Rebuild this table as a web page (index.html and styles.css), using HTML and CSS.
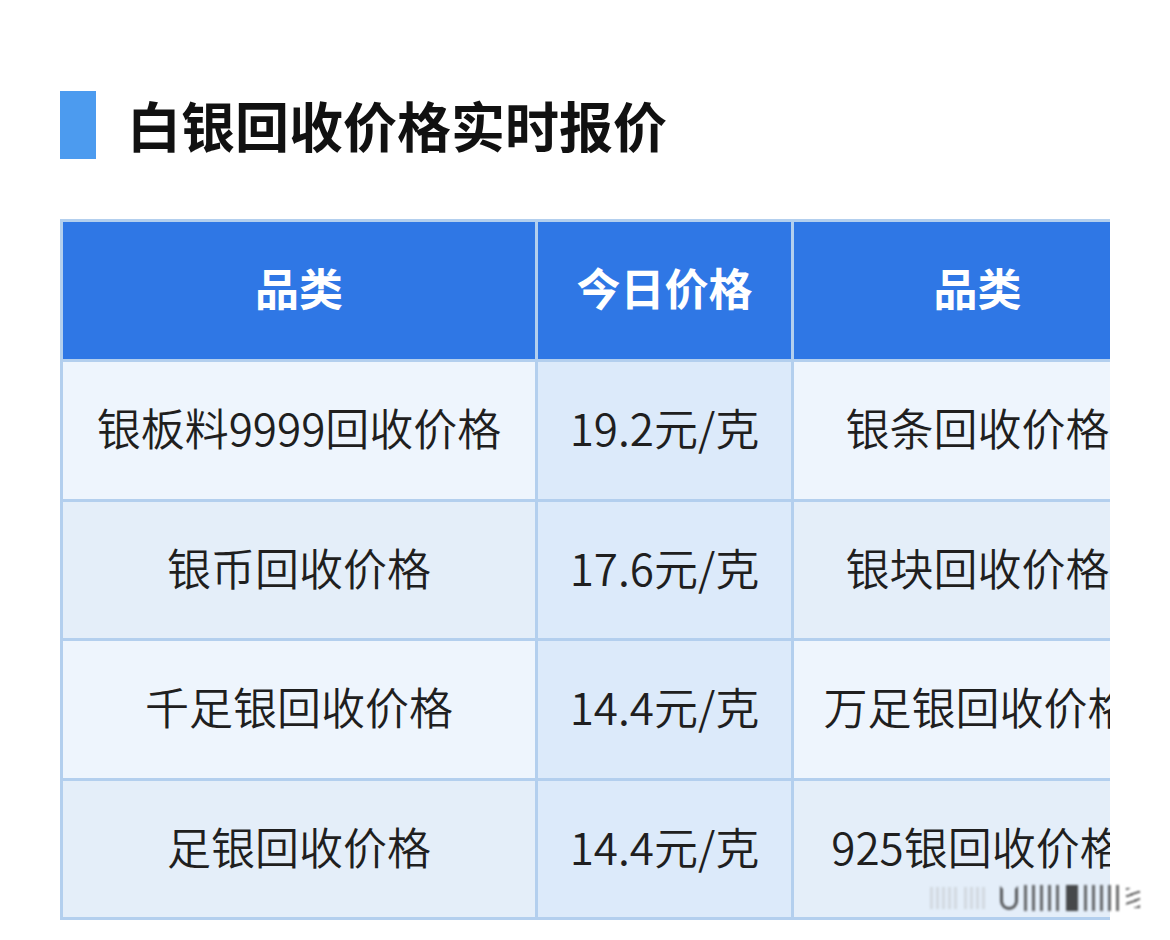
FILE: index.html
```html
<!DOCTYPE html>
<html lang="zh-CN">
<head>
<meta charset="utf-8">
<title>白银回收价格实时报价</title>
<link rel="stylesheet" href="styles.css">
</head>
<body>
<div class="page">
  <div class="heading">
    <span class="bar"></span>
    <h1 class="title">白银回收价格实时报价</h1>
  </div>
  <div class="table-wrap">
    <div class="table">
      <div class="cell head">品类</div>
      <div class="cell head">今日价格</div>
      <div class="cell head">品类</div>

      <div class="cell odd">银板料9999回收价格</div>
      <div class="cell price">19.2元/克</div>
      <div class="cell odd">银条回收价格</div>

      <div class="cell even">银币回收价格</div>
      <div class="cell price">17.6元/克</div>
      <div class="cell even">银块回收价格</div>

      <div class="cell odd">千足银回收价格</div>
      <div class="cell price">14.4元/克</div>
      <div class="cell odd">万足银回收价格</div>

      <div class="cell even">足银回收价格</div>
      <div class="cell price">14.4元/克</div>
      <div class="cell even">925银回收价格</div>
    </div>
  </div>
  <div class="watermark" aria-hidden="true">
    <span class="wm-light"></span>
    <span class="wm-light short"></span>
    <span class="wm-o"></span>
    <span class="wm-bars"></span>
    <span class="wm-dark"></span>
    <span class="wm-bars"></span>
    <span class="wm-end"></span>
  </div>
</div>
</body>
</html>
```

FILE: styles.css
```css
html, body {
  margin: 0;
  padding: 0;
  background: #ffffff;
}

body {
  width: 1170px;
  height: 940px;
  overflow: hidden;
  font-family: "Noto Sans CJK SC", "Noto Sans", sans-serif;
  color: #1e1e1e;
}

.page {
  position: relative;
  height: 940px;
  box-sizing: border-box;
  padding: 91px 0 0 60px;
}

.heading {
  display: flex;
  align-items: center;
  gap: 31px;
  height: 68px;
}

.bar {
  display: block;
  width: 36px;
  height: 68px;
  background: #4c9bef;
}

.title {
  margin: 0;
  font-size: 54px;
  font-weight: 700;
  line-height: 68px;
  color: #111111;
}

.table-wrap {
  margin-top: 60px;
  width: 1050px;
  overflow: hidden;
}

.table {
  display: grid;
  grid-template-columns: 472px 253px 367px;
  grid-template-rows: 137px 137px 136px 137px 136px;
  gap: 3px;
  padding: 3px;
  width: max-content;
  background: #b3cfee;
}

.cell {
  display: flex;
  align-items: center;
  justify-content: center;
  box-sizing: border-box;
  padding-bottom: 7px;
  font-size: 44px;
  font-weight: 350;
  white-space: nowrap;
  color: #1f1f1f;
}

.head {
  background: #2f77e5;
  color: #ffffff;
  font-weight: 700;
  font-size: 44px;
}

.odd {
  background: #eef5fd;
}

.even {
  background: #e4eef9;
}

.price {
  background: #dceafa;
}

.watermark {
  position: absolute;
  left: 930px;
  top: 880px;
  display: flex;
  align-items: center;
  gap: 6px;
  height: 36px;
  filter: blur(1.1px);
}

.wm-light {
  display: block;
  width: 28px;
  height: 22px;
  background: repeating-linear-gradient(90deg, rgba(170,170,170,0.3) 0 3px, transparent 3px 6px);
}

.wm-light.short {
  width: 24px;
}

.wm-o {
  display: block;
  width: 18px;
  height: 24px;
  margin-left: 6px;
  border: 3px solid rgba(40,40,40,0.75);
  border-top-color: transparent;
  border-radius: 0 0 9px 9px;
  box-sizing: border-box;
}

.wm-bars {
  display: block;
  width: 36px;
  height: 26px;
  background: repeating-linear-gradient(90deg, rgba(60,60,60,0.75) 0 3px, transparent 3px 8px);
}

.wm-dark {
  display: block;
  width: 12px;
  height: 26px;
  background: rgba(30,30,30,0.8);
}

.wm-end {
  display: block;
  width: 14px;
  height: 20px;
  background: repeating-linear-gradient(160deg, rgba(40,40,40,0.8) 0 2px, transparent 2px 7px);
}
```
